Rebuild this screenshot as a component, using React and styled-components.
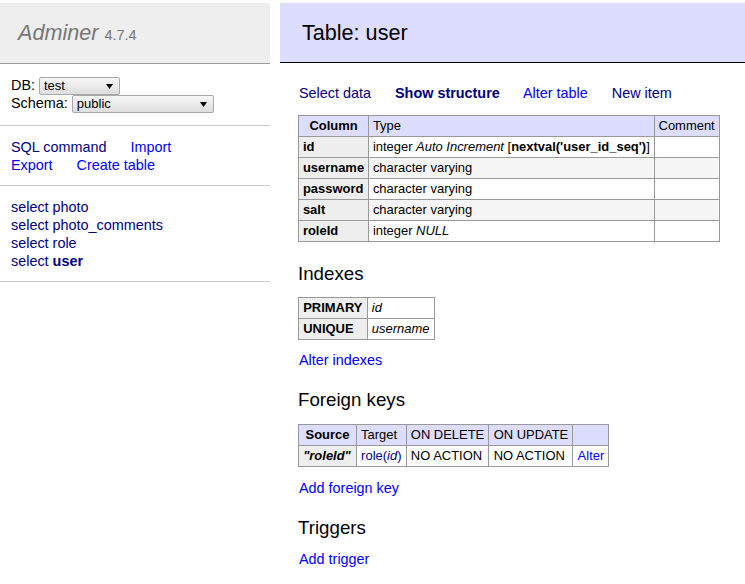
import styled, { createGlobalStyle } from "styled-components";

const GlobalStyle = createGlobalStyle`
  body {
    margin: 0;
    background: #fff;
    color: #000;
    font-family: "Liberation Sans", Arial, sans-serif;
    font-size: 14.4px;
    line-height: 18px;
  }
`;

const Page = styled.div`
  display: flex;
  align-items: flex-start;
  padding-top: 3px;
`;

const Sidebar = styled.nav`
  width: 270px;
  flex-shrink: 0;
`;

const Logo = styled.h1`
  margin: 0;
  padding: 16px 18px 17px;
  background: #eee;
  border-bottom: 1px solid #999;
  color: #777;
  font-size: 21.6px;
  line-height: 27px;
  font-weight: normal;
  font-style: italic;
`;

const Version = styled.span`
  font-style: normal;
  font-size: 14.5px;
  line-height: 1;
`;

const MenuBlock = styled.div`
  padding: 11.5px 11px ${(p) => p.$bottom || "11.5px"};
  border-bottom: 1px solid #ccc;
`;

const Line = styled.div`
  height: 18px;
  white-space: nowrap;
`;

const SelectLine = styled.div`
  display: flex;
  align-items: flex-start;
  height: 18px;
  white-space: nowrap;
`;

const FakeSelect = styled.span`
  display: flex;
  align-items: center;
  justify-content: space-between;
  box-sizing: border-box;
  width: ${(p) => p.$width}px;
  height: 18px;
  margin: 1.5px 0 0 4px;
  padding: 0 6px 0 4px;
  border: 1px solid #a9a9a9;
  border-radius: 2px;
  background: linear-gradient(#f6f6f6, #dedede);
  font-size: 13px;
  line-height: 16px;
  color: #000;
`;

const Link = styled.a`
  color: ${(p) => (p.$visited ? "#000080" : "#0000ff")};
  text-decoration: none;
  font-weight: ${(p) => (p.$bold ? "bold" : "normal")};
  margin-right: ${(p) => (p.$gap ? "20px" : "0")};
  cursor: pointer;
`;

const Main = styled.main`
  flex: 1;
  margin-left: 10px;
`;

const TitleBar = styled.h2`
  margin: 0;
  padding: 16px 22px 16px;
  background: #ddf;
  border-bottom: 1px solid #000;
  font-size: 21.6px;
  line-height: 27px;
  font-weight: normal;
`;

const Body = styled.div`
  padding: 21px 0 0 18px;
`;

const LinkRow = styled.div`
  height: 18px;
  padding-left: 1px;
  white-space: nowrap;
`;

const Grid = styled.table`
  margin-top: ${(p) => p.$top}px;
  border-collapse: collapse;
  font-size: 12.96px;
  line-height: 16px;

  td,
  th {
    border: 1px solid #999;
    padding: 2px ${(p) => (p.$wide ? "4.2px" : "3.9px")};
    text-align: left;
    white-space: nowrap;
  }
  th {
    background: #eee;
  }
  thead td,
  thead th {
    background: #ddf;
  }
  thead th {
    text-align: center;
    padding: 2px 6.5px;
  }
  tbody tr:nth-child(2n) td {
    background: ${(p) => (p.$odds ? "#f5f5f5" : "#fff")};
  }
`;

const Heading = styled.h3`
  margin: ${(p) => p.$top}px 0 0;
  font-size: 18.72px;
  line-height: 23px;
  font-weight: normal;
`;

const Para = styled.p`
  margin: ${(p) => p.$top}px 0 0;
  padding-left: 1px;
  height: 18px;
`;

function Arrow() {
  return (
    <svg width="7" height="5" viewBox="0 0 7 5">
      <polygon points="0,0 7,0 3.5,5" fill="#000" />
    </svg>
  );
}

const columns = [
  ["id", <>integer <i>Auto Increment</i> [<b>nextval('user_id_seq')</b>]</>],
  ["username", "character varying"],
  ["password", "character varying"],
  ["salt", "character varying"],
  ["roleId", <>integer <i>NULL</i></>],
];

export default function App() {
  return (
    <>
      <GlobalStyle />
      <Page>
        <Sidebar>
          <Logo>
            Adminer <Version>4.7.4</Version>
          </Logo>
          <MenuBlock $bottom="13.5px">
            <SelectLine>
              DB:
              <FakeSelect $width={81}>
                test
                <Arrow />
              </FakeSelect>
            </SelectLine>
            <SelectLine>
              Schema:
              <FakeSelect $width={142}>
                public
                <Arrow />
              </FakeSelect>
            </SelectLine>
          </MenuBlock>
          <MenuBlock>
            <Line>
              <Link $visited $gap>SQL command</Link> <Link>Import</Link>
            </Line>
            <Line>
              <Link $gap>Export</Link> <Link>Create table</Link>
            </Line>
          </MenuBlock>
          <MenuBlock>
            <Line><Link $visited>select photo</Link></Line>
            <Line><Link $visited>select photo_comments</Link></Line>
            <Line><Link $visited>select role</Link></Line>
            <Line>
              <Link $visited>select <b>user</b></Link>
            </Line>
          </MenuBlock>
        </Sidebar>

        <Main>
          <TitleBar>Table: user</TitleBar>
          <Body>
            <LinkRow>
              <Link $visited $gap>Select data</Link>{" "}
              <Link $visited $bold $gap>Show structure</Link>{" "}
              <Link $gap>Alter table</Link>{" "}
              <Link $visited>New item</Link>
            </LinkRow>

            <Grid $top={13} $odds>
              <thead>
                <tr>
                  <th>Column</th>
                  <td>Type</td>
                  <td>Comment</td>
                </tr>
              </thead>
              <tbody>
                {columns.map(([name, type]) => (
                  <tr key={name}>
                    <th>{name}</th>
                    <td>{type}</td>
                    <td></td>
                  </tr>
                ))}
              </tbody>
            </Grid>

            <Heading $top={19.5}>Indexes</Heading>
            <Grid $top={12} $wide>
              <tbody>
                <tr>
                  <th>PRIMARY</th>
                  <td><i>id</i></td>
                </tr>
                <tr>
                  <th>UNIQUE</th>
                  <td><i>username</i></td>
                </tr>
              </tbody>
            </Grid>
            <Para $top={11.4}>
              <Link>Alter indexes</Link>
            </Para>

            <Heading $top={19.5}>Foreign keys</Heading>
            <Grid $top={13} $wide>
              <thead>
                <tr>
                  <th>Source</th>
                  <td>Target</td>
                  <td>ON DELETE</td>
                  <td>ON UPDATE</td>
                  <td></td>
                </tr>
              </thead>
              <tbody>
                <tr>
                  <th><i>"roleId"</i></th>
                  <td>
                    <Link $visited>role(<i>id</i>)</Link>
                  </td>
                  <td>NO ACTION</td>
                  <td>NO ACTION</td>
                  <td><Link>Alter</Link></td>
                </tr>
              </tbody>
            </Grid>
            <Para $top={11.4}>
              <Link>Add foreign key</Link>
            </Para>

            <Heading $top={19}>Triggers</Heading>
            <Para $top={11.3}>
              <Link>Add trigger</Link>
            </Para>
          </Body>
        </Main>
      </Page>
    </>
  );
}
